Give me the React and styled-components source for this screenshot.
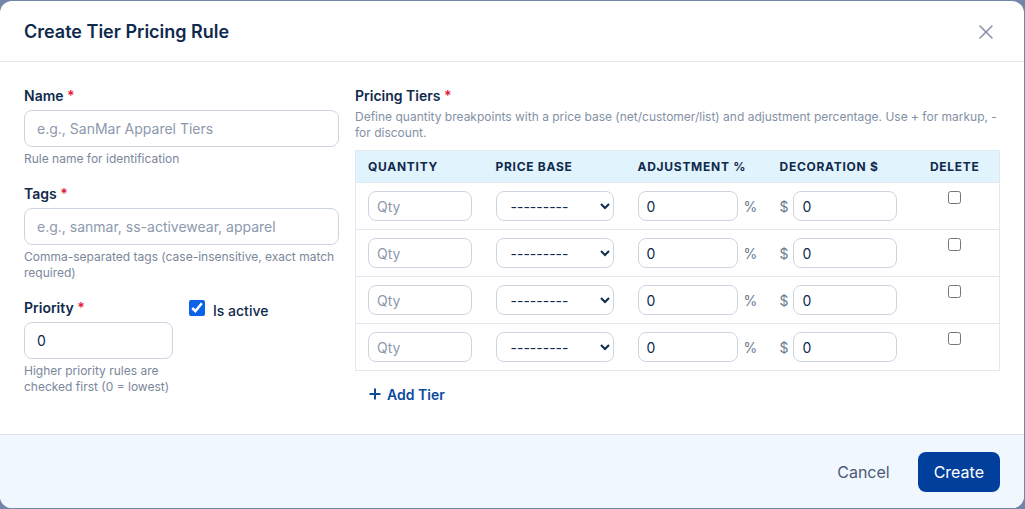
import React, { useState } from 'react'
import styled, { createGlobalStyle } from 'styled-components'
import { X } from 'lucide-react'

const GlobalStyle = createGlobalStyle`
  * {
    box-sizing: border-box;
  }

  body {
    margin: 0;
    background: #7186a8;
    font-family: Inter, 'Liberation Sans', sans-serif;
    color: #102a4c;
  }
`

const Modal = styled.div`
  width: 1024px;
  height: 507px;
  margin-top: 1px;
  background: #fff;
  border-radius: 12px;
  overflow: hidden;
  display: flex;
  flex-direction: column;
`

const Header = styled.div`
  height: 61px;
  flex-shrink: 0;
  display: flex;
  align-items: center;
  justify-content: space-between;
  padding: 2px 26px 0 24px;
  border-bottom: 1px solid #e3e8ef;
`

const Title = styled.h2`
  margin: 0;
  font-size: 18px;
  font-weight: 600;
  line-height: 24px;
  color: #0f2a4d;
`

const CloseButton = styled.button`
  border: 0;
  background: none;
  padding: 0;
  display: flex;
  color: #8391a8;
  cursor: pointer;
`

const Body = styled.div`
  flex: 1;
  display: grid;
  grid-template-columns: 315px 1fr;
  column-gap: 16px;
  padding: 23px 24px 24px;
`

const Column = styled.div`
  display: flex;
  flex-direction: column;
`

const Field = styled.div`
  display: flex;
  flex-direction: column;
  width: ${(p) => (p.width ? `${p.width}px` : 'auto')};
  margin-bottom: ${(p) => (p.last ? 0 : '16px')};
`

const Label = styled.label`
  font-size: 14px;
  font-weight: 600;
  line-height: 20px;
  color: #102a4c;
  padding-top: 1px;
  margin-bottom: 4px;

  span {
    color: #e5173a;
  }
`

const TextInput = styled.input`
  height: 37px;
  width: 100%;
  padding: 0 12px;
  border: 1px solid #cdd5e1;
  border-radius: 8px;
  font-family: inherit;
  font-size: 14px;
  color: #102a4c;
  outline: none;

  &::placeholder {
    color: #8d99ae;
  }
`

const Help = styled.p`
  margin: 4px 0 0;
  font-size: 12px;
  line-height: 16px;
  color: #7b879b;
`

const PriorityRow = styled.div`
  display: flex;
  gap: 16px;
`

const CheckRow = styled.label`
  display: flex;
  align-items: flex-start;
  gap: 8px;
  padding-top: 3px;
  font-size: 14px;
  font-weight: 500;
  line-height: 20px;
  color: #102a4c;

  input {
    width: 16px;
    height: 16px;
    margin: 0;
    accent-color: #0b63e8;
  }

  span {
    margin-top: 1px;
  }
`

const Description = styled(Help)`
  margin-top: -1px;
  margin-bottom: 9px;
  color: #8391a6;
`

const Table = styled.table`
  width: 100%;
  table-layout: fixed;
  border-collapse: collapse;
  border: 1px solid #e2e8f0;
`

const Th = styled.th`
  height: 32px;
  padding: 0 12px;
  background: #e1f3fd;
  text-align: ${(p) => p.align || 'left'};
  text-transform: uppercase;
  font-size: 12px;
  font-weight: 700;
  letter-spacing: 0.06em;
  color: #102a4c;
  white-space: nowrap;
`

const Td = styled.td`
  padding: 8px 12px;
  vertical-align: top;
  border-top: 1px solid #e2e8f0;
  text-align: ${(p) => p.align || 'left'};

  input[type='checkbox'] {
    display: block;
    margin: 0 auto;
    width: 13px;
    height: 13px;
  }
`

const CellInput = styled.input`
  height: 30px;
  width: ${(p) => (p.size ? `${p.size}px` : '100%')};
  flex: none;
  padding: 0 8px;
  border: 1px solid #cdd5e1;
  border-radius: 8px;
  font-family: inherit;
  font-size: 14px;
  color: #102a4c;
  outline: none;

  &::placeholder {
    color: #8d99ae;
  }
`

const Select = styled.select`
  height: 30px;
  width: 100%;
  padding: 0 6px 0 10px;
  border: 1px solid #cdd5e1;
  border-radius: 8px;
  background: #fff;
  font-family: inherit;
  font-size: 14px;
  color: #102a4c;
  outline: none;
`

const Affix = styled.div`
  display: flex;
  align-items: center;
  gap: ${(p) => p.gap}px;
  font-size: 14px;
  color: #6b7990;
`

const AddButton = styled.button`
  align-self: flex-start;
  height: 32px;
  margin-top: 7px;
  padding: 0 14px;
  display: flex;
  align-items: center;
  gap: 6px;
  border: 0;
  background: none;
  font-family: inherit;
  font-size: 14px;
  font-weight: 600;
  color: #0c4a9e;
  cursor: pointer;
`

const Footer = styled.div`
  flex: 1;
  display: flex;
  align-items: center;
  justify-content: flex-end;
  gap: 12px;
  padding: 0 24px;
  background: #f0f7fe;
  border-top: 1px solid #dde5ee;
`

const Button = styled.button`
  height: 40px;
  padding: 0 16px;
  border: 0;
  border-radius: 8px;
  font-family: inherit;
  font-size: 16px;
  font-weight: 400;
  cursor: pointer;
  background: ${(p) => (p.primary ? '#013f9c' : 'transparent')};
  color: ${(p) => (p.primary ? '#fff' : '#4b5b74')};
`

const PlusIcon = () => (
  <svg width="12" height="12" viewBox="0 0 12 12">
    <path d="M6 0.5v11M0.5 6h11" stroke="currentColor" strokeWidth="2" />
  </svg>
)

const App = () => {
  const [tiers] = useState([1, 2, 3, 4])
  const [active, setActive] = useState(true)

  const renderTier = (id) => (
    <tr key={id}>
      <Td>
        <CellInput placeholder="Qty" />
      </Td>
      <Td>
        <Select defaultValue="">
          <option value="">---------</option>
          <option value="net">Net</option>
          <option value="customer">Customer</option>
          <option value="list">List</option>
        </Select>
      </Td>
      <Td>
        <Affix gap={6}>
          <CellInput size={100} defaultValue="0" />
          <span>%</span>
        </Affix>
      </Td>
      <Td>
        <Affix gap={5}>
          <span>$</span>
          <CellInput size={104} defaultValue="0" />
        </Affix>
      </Td>
      <Td align="center">
        <input type="checkbox" />
      </Td>
    </tr>
  )

  return (
    <>
      <GlobalStyle />
      <Modal>
        <Header>
          <Title>Create Tier Pricing Rule</Title>
          <CloseButton>
            <X size={24} strokeWidth={1.5} />
          </CloseButton>
        </Header>
        <Body>
          <Column>
            <Field>
              <Label>
                Name <span>*</span>
              </Label>
              <TextInput placeholder="e.g., SanMar Apparel Tiers" />
              <Help>Rule name for identification</Help>
            </Field>
            <Field>
              <Label>
                Tags <span>*</span>
              </Label>
              <TextInput placeholder="e.g., sanmar, ss-activewear, apparel" />
              <Help>Comma-separated tags (case-insensitive, exact match required)</Help>
            </Field>
            <PriorityRow>
              <Field width={149} last>
                <Label>
                  Priority <span>*</span>
                </Label>
                <TextInput defaultValue="0" />
                <Help>Higher priority rules are checked first (0 = lowest)</Help>
              </Field>
              <CheckRow>
                <input
                  type="checkbox"
                  checked={active}
                  onChange={() => setActive(!active)}
                />
                <span>Is active</span>
              </CheckRow>
            </PriorityRow>
          </Column>
          <Column>
            <Label>
              Pricing Tiers <span>*</span>
            </Label>
            <Description>
              Define quantity breakpoints with a price base (net/customer/list) and
              adjustment percentage. Use + for markup, - for discount.
            </Description>
            <Table>
              <colgroup>
                <col style={{ width: 128 }} />
                <col style={{ width: 142 }} />
                <col style={{ width: 142 }} />
                <col style={{ width: 143 }} />
                <col />
              </colgroup>
              <thead>
                <tr>
                  <Th>Quantity</Th>
                  <Th>Price Base</Th>
                  <Th>Adjustment %</Th>
                  <Th>Decoration $</Th>
                  <Th align="center">Delete</Th>
                </tr>
              </thead>
              <tbody>{tiers.map(renderTier)}</tbody>
            </Table>
            <AddButton>
              <PlusIcon />
              Add Tier
            </AddButton>
          </Column>
        </Body>
        <Footer>
          <Button>Cancel</Button>
          <Button primary>Create</Button>
        </Footer>
      </Modal>
    </>
  )
}

export default App
